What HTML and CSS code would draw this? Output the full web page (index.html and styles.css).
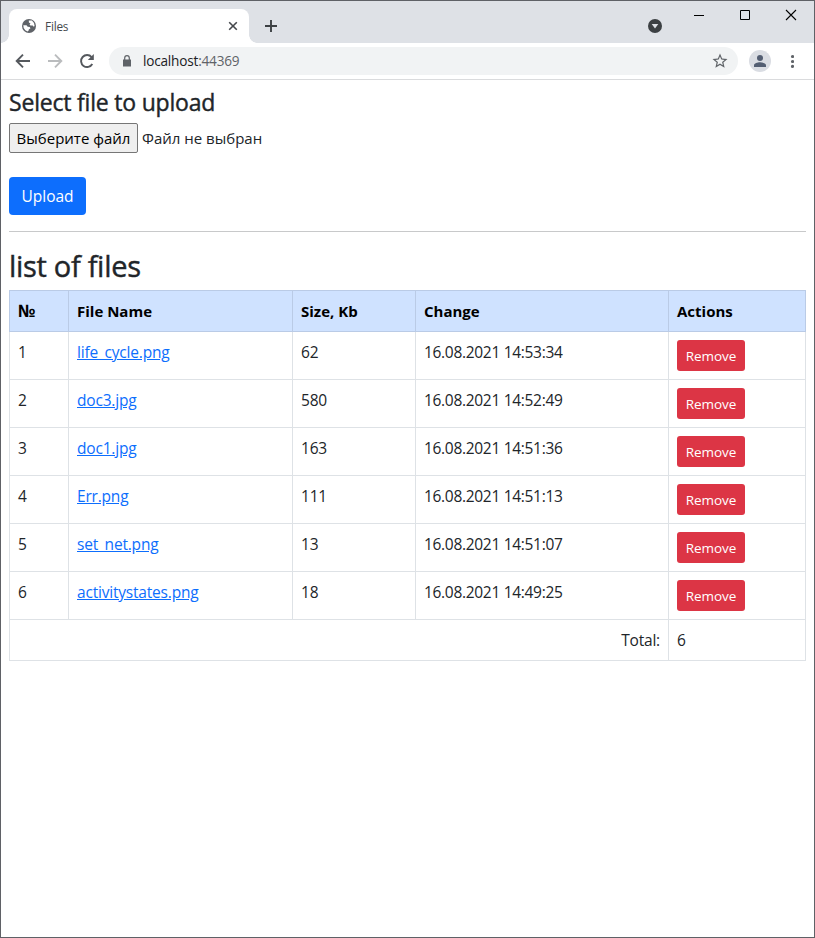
FILE: index.html
```html
<!DOCTYPE html>
<html lang="en">
<head>
<meta charset="utf-8">
<title>Files</title>
<link rel="stylesheet" href="styles.css">
</head>
<body>
<div class="window">
  <header class="titlebar">
    <div class="tab">
      <svg class="tab-globe" viewBox="0 0 14 14" width="14" height="14"><circle cx="7" cy="7" r="7" fill="#5f6368"/><path d="M6.8 1.6h3.1L12 4l.6 3-.9.8-1-1.2H8.4L7.6 5.5l.9-1.1-1.6-1zM1.3 6.2l3.2.1 1.2 1.4 2 .2.8 1.3-1.7 1.2-.3 1.3-.9.8-2.3-1.2L1.7 9z" fill="#fff"/></svg>
      <span class="tab-title">Files</span>
      <svg class="tab-close" viewBox="0 0 10 10" width="10" height="10"><path d="M1.2 1.2l7.6 7.6M8.8 1.2L1.2 8.8" stroke="#45484c" stroke-width="1.6"/></svg>
    </div>
    <svg class="new-tab" viewBox="0 0 12 12" width="12" height="12"><path d="M6 0v12M0 6h12" stroke="#3c4043" stroke-width="1.9"/></svg>
    <svg class="tab-search" viewBox="0 0 14 14" width="14" height="14"><circle cx="7" cy="7" r="7" fill="#3c4043"/><path d="M3.7 5h6.6L7 9.4z" fill="#dee1e6"/></svg>
    <div class="controls">
      <svg viewBox="0 0 46 30" width="46" height="30"><path d="M18 14.5h10" stroke="#000"/></svg>
      <svg viewBox="0 0 46 30" width="46" height="30"><path d="M18.5 9.5h9v9h-9z" fill="none" stroke="#000"/></svg>
      <svg viewBox="0 0 46 30" width="46" height="30"><path d="M18 9l10 10M28 9L18 19" stroke="#000" stroke-width="1.1"/></svg>
    </div>
  </header>
  <nav class="toolbar">
    <svg class="nav-icon" viewBox="0 0 16 16" width="16" height="16"><path d="M15 8H2M8 1.7L1.7 8 8 14.3" fill="none" stroke="#55595e" stroke-width="1.9"/></svg>
    <svg class="nav-icon" viewBox="0 0 16 16" width="16" height="16"><path d="M1 8h13M8 1.7L14.3 8 8 14.3" fill="none" stroke="#babcbe" stroke-width="1.9"/></svg>
    <svg class="nav-icon" viewBox="0 0 16 16" width="16" height="16"><path d="M13.3 11A6 6 0 1 1 12.6 4.1" fill="none" stroke="#55595e" stroke-width="1.9"/><path d="M14.8 1v6h-6z" fill="#55595e"/></svg>
    <div class="address">
      <svg class="lock" viewBox="0 0 8 12" width="8" height="12"><path d="M0 4.5h8V11.5H0z" fill="#5f6368"/><path d="M1.7 5V3a2.3 2.3 0 0 1 4.6 0v2" fill="none" stroke="#5f6368" stroke-width="1.2"/></svg>
      <span class="url">localhost<span class="port">:44369</span></span>
      <svg class="star" viewBox="0 0 24 24" width="18" height="18"><path d="M22 9.240l-7.190-.62L12 2 9.190 8.630 2 9.240l5.460 4.730L5.820 21 12 17.270 18.180 21l-1.630-7.030L22 9.240zM12 15.400l-3.760 2.270 1-4.280-3.320-2.880 4.380-.38L12 6.100l1.710 4.040 4.380.38-3.320 2.880 1 4.280L12 15.400z" fill="#5f6368"/></svg>
    </div>
    <svg class="profile" viewBox="0 0 22 22" width="22" height="22"><circle cx="11" cy="11" r="11" fill="#dadde3"/><circle cx="11" cy="8" r="3" fill="#535e72"/><path d="M5 17v-1.700c0-2 3.500-3 6-3s6 1 6 3V17z" fill="#535e72"/></svg>
    <svg class="dots" viewBox="0 0 4 14" width="4" height="14"><g fill="#5f6368"><circle cx="2.5" cy="2.500" r="1.600"/><circle cx="2.5" cy="7.500" r="1.600"/><circle cx="2.5" cy="12.400" r="1.600"/></g></svg>
  </nav>
  <main class="page">
    <h4 class="upload-title">Select file to upload</h4>
    <div class="file-field"><button class="file-button">Выберите файл</button><span class="file-status">Файл не выбран</span></div>
    <button class="btn btn-primary">Upload</button>
    <hr class="divider">
    <h2 class="list-title">list of files</h2>
    <table class="files">
      <colgroup><col class="c-num"><col class="c-name"><col class="c-size"><col class="c-change"><col class="c-actions"></colgroup>
      <thead><tr><th class="num-head">№</th><th>File Name</th><th>Size, Kb</th><th>Change</th><th>Actions</th></tr></thead>
      <tbody>
        <tr><td>1</td><td><a href="#">life_cycle.png</a></td><td>62</td><td class="date">16.08.2021 14:53:34</td><td><button class="btn btn-danger">Remove</button></td></tr>
        <tr><td>2</td><td><a href="#">doc3.jpg</a></td><td>580</td><td class="date">16.08.2021 14:52:49</td><td><button class="btn btn-danger">Remove</button></td></tr>
        <tr><td>3</td><td><a href="#">doc1.jpg</a></td><td>163</td><td class="date">16.08.2021 14:51:36</td><td><button class="btn btn-danger">Remove</button></td></tr>
        <tr><td>4</td><td><a href="#">Err.png</a></td><td>111</td><td class="date">16.08.2021 14:51:13</td><td><button class="btn btn-danger">Remove</button></td></tr>
        <tr><td>5</td><td><a href="#">set_net.png</a></td><td>13</td><td class="date">16.08.2021 14:51:07</td><td><button class="btn btn-danger">Remove</button></td></tr>
        <tr><td>6</td><td><a href="#">activitystates.png</a></td><td>18</td><td class="date">16.08.2021 14:49:25</td><td><button class="btn btn-danger">Remove</button></td></tr>
        <tr class="total"><td colspan="4">Total:</td><td>6</td></tr>
      </tbody>
    </table>
  </main>
</div>
</body>
</html>
```
FILE: styles.css
```css
* { box-sizing: border-box; }
body { margin: 0; font-family: "Open Sans", "Noto Sans", sans-serif; font-size: 15px; line-height: 24px; color: #212529; background: #fff; }
svg { display: block; flex: none; }
button { font-family: inherit; margin: 0; }
.window { height: 938px; border: 1px solid #5f6166; overflow: hidden; }

.titlebar { display: flex; height: 42px; background: #dee1e6; padding-left: 8px; }
.tab { position: relative; display: flex; align-items: center; width: 240px; height: 34px; margin-top: 8px; padding: 0 11px 0 13px; background: #fff; border-radius: 8px 8px 0 0; }
.tab::before, .tab::after { content: ""; position: absolute; bottom: 0; width: 8px; height: 8px; }
.tab::before { left: -8px; background: radial-gradient(circle at 0 0, #dee1e6 7.5px, #fff 8px); }
.tab::after { right: -8px; background: radial-gradient(circle at 100% 0, #dee1e6 7.5px, #fff 8px); }
.tab-title { flex: 1; margin-left: 9px; font-size: 11.8px; letter-spacing: -0.2px; color: #45484c; }
.new-tab { margin: 19px 0 0 16px; }
.tab-search { margin: 18px 14px 0 auto; }
.controls { display: flex; }

.toolbar { display: flex; align-items: center; height: 37px; padding: 0 20px 1px 14px; border-bottom: 1px solid #dadbdd; }
.nav-icon { margin-right: 16px; }
.address { display: flex; align-items: center; width: 629px; height: 28px; margin-left: -2px; padding: 0 9px 0 14px; border-radius: 14px; background: #f1f3f4; }
.url { flex: 1; margin-left: 12px; font-size: 13.6px; letter-spacing: -0.2px; color: #202124; }
.port { color: #5f6368; }
.profile { margin-left: 11px; }
.dots { margin-left: auto; }

.page { padding: 8px; }
.upload-title { margin: 0 0 7px; font-size: 23px; line-height: 28px; font-weight: 500; letter-spacing: -0.2px; -webkit-text-stroke: 0.4px #212529; }
.file-field { display: flex; align-items: center; height: 30px; }
.file-button { width: 129px; height: 30px; padding: 0; border: 1px solid #767676; border-radius: 2px; background: #efefef; font-size: 15px; white-space: nowrap; color: #000; }
.file-status { margin-left: 4px; }
.btn { display: block; padding: 0; border: 0; border-radius: 4px; color: #fff; }
.btn-primary { width: 77px; height: 38px; margin-top: 24px; background: #0d6efd; font-size: 15.5px; }
.btn-danger { width: 68px; height: 31px; border-radius: 3px; background: #dc3545; font-size: 13.5px; letter-spacing: -0.1px; }
.divider { height: 1px; margin: 16px 0 17px; border: 0; background: #c8c9ca; }
.list-title { margin: 0 0 7px; font-size: 29px; line-height: 34px; font-weight: 500; letter-spacing: -0.3px; -webkit-text-stroke: 0.4px #212529; }

.files { width: 797px; table-layout: fixed; border-collapse: collapse; }
.c-num { width: 59px; }
.c-name { width: 224px; }
.c-size { width: 123px; }
.c-change { width: 253px; }
.c-actions { width: 137px; }
.files th, .files td { padding: 8px 8px 7px; border: 1px solid #dee2e6; text-align: left; vertical-align: top; height: 48px; font-weight: 400; }
.files td { font-size: 15.5px; letter-spacing: -0.2px; }
.files .date { letter-spacing: -0.31px; }
.files th { height: 41px; background: #cfe2ff; border-color: #bacbe6; color: #000; font-weight: 700; }
.files .num-head { font-size: 17px; }
.files a { color: #0d6efd; text-decoration: underline; }
.files .total td { height: 41px; }
.total td:first-child { text-align: right; }
```
